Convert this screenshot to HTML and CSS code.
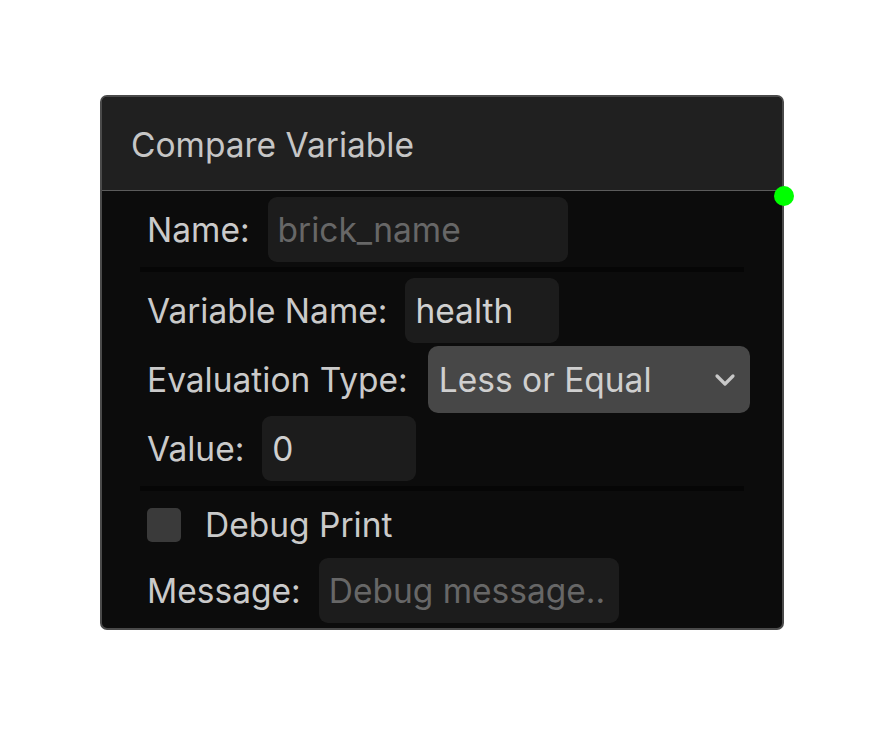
FILE: index.html
```html
<!DOCTYPE html>
<html>
  <head>
    <title>Compare Variable</title>
    <link rel="stylesheet" href="styles.css">
  </head>
  <body>
    <div class="node">
      <div class="node-header">Compare Variable</div>
      <span class="port port-out"></span>
      <div class="node-body">
        <section class="group">
          <div class="row">
            <label>Name:</label>
            <input type="text" class="field field-wide" placeholder="brick_name">
          </div>
        </section>
        <section class="group">
          <div class="row">
            <label>Variable Name:</label>
            <input type="text" class="field field-short" value="health">
          </div>
          <div class="row row-select">
            <label>Evaluation Type:</label>
            <div class="select">
              <span>Less or Equal</span>
              <svg width="22" height="14" viewBox="0 0 22 14">
                <path d="M3 3 L11 11 L19 3" fill="none" stroke="#c8c8c8" stroke-width="3.2" stroke-linecap="round" stroke-linejoin="round"/>
              </svg>
            </div>
          </div>
          <div class="row">
            <label>Value:</label>
            <input type="text" class="field field-short" value="0">
          </div>
        </section>
        <section class="group group-last">
          <div class="row row-check">
            <span class="checkbox"></span>
            <label>Debug Print</label>
          </div>
          <div class="row">
            <label>Message:</label>
            <input type="text" class="field field-wide" placeholder="Debug message..">
          </div>
        </section>
      </div>
    </div>
  </body>
</html>
```

FILE: styles.css
```css
body {
  margin: 0;
  padding: 95px 0 0 100px;
  background: #fff;
  font-family: 'Inter', 'Noto Sans', sans-serif;
}
.node {
  position: relative;
  width: 680px;
  height: 531px;
  border: 2px solid #4a4a4a;
  border-radius: 7px;
  background: #0c0c0c;
  color: #cacaca;
  font-size: 33.5px;
}
.node-header {
  height: 94px;
  box-sizing: border-box;
  padding: 2px 0 0 29px;
  display: flex;
  align-items: center;
  background: #202020;
  border-bottom: 1px solid #5c5c5c;
  border-radius: 5px 5px 0 0;
  color: #c6c6c6;
}
.port {
  position: absolute;
  width: 20px;
  height: 20px;
  border-radius: 50%;
  background: #00ff00;
}
.port-out {
  right: -12px;
  top: 89px;
}
.node-body {
  padding: 0 38px;
}
.group {
  display: flex;
  flex-direction: column;
  gap: 3px;
  padding: 6px 0 5px;
  border-bottom: 5px solid #060606;
}
.group-last {
  border-bottom: none;
  padding-top: 4px;
}
.row {
  display: flex;
  align-items: center;
  gap: 18px;
  height: 65px;
  padding-left: 7px;
}
.row-select {
  height: 67px;
  gap: 20px;
}
.row-check {
  height: 60px;
  gap: 24px;
}
label {
  white-space: nowrap;
}
.field {
  flex-shrink: 0;
  height: 65px;
  box-sizing: border-box;
  padding: 0 10px;
  border: none;
  border-radius: 9px;
  background: #1c1c1c;
  color: #d0d0d0;
  font: inherit;
  outline: none;
}
.field::placeholder {
  color: #676767;
}
.field-wide {
  width: 300px;
}
.field-short {
  width: 154px;
}
.select {
  flex-shrink: 0;
  width: 322px;
  height: 67px;
  box-sizing: border-box;
  padding: 0 14px 0 11px;
  display: flex;
  align-items: center;
  justify-content: space-between;
  border-radius: 10px;
  background: #474747;
  color: #cfcfcf;
}
.checkbox {
  flex-shrink: 0;
  width: 34px;
  height: 34px;
  border-radius: 5px;
  background: #3a3a3a;
}
```
